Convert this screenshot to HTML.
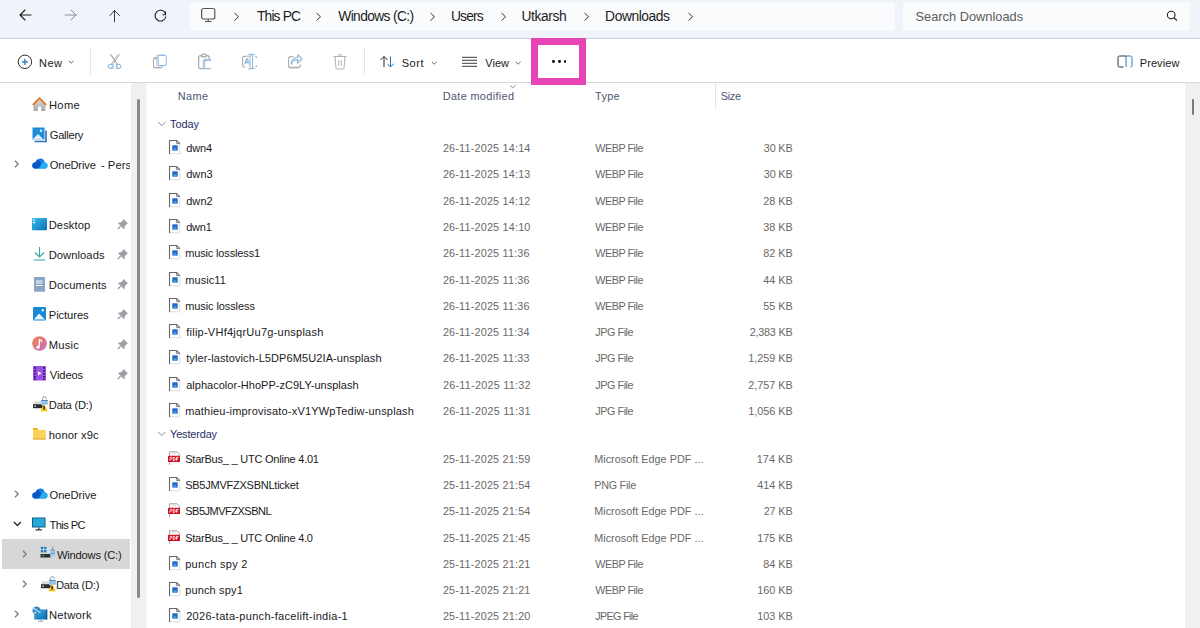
<!DOCTYPE html><html><head><meta charset="utf-8"><style>
html,body{margin:0;padding:0;width:1200px;height:628px;overflow:hidden;background:#ffffff;}
body{position:relative;font-family:"Liberation Sans",sans-serif;}
.t{position:absolute;white-space:nowrap;line-height:1;-webkit-font-smoothing:antialiased;}
svg{overflow:visible}
</style></head><body>
<div style="position:absolute;left:0px;top:0px;width:1200px;height:38px;background:#f0f4fa"></div>
<div style="position:absolute;left:0px;top:38px;width:1200px;height:1px;background:#c9d0d7"></div>
<svg style="position:absolute;left:14px;top:4px" width="20" height="24" viewBox="0 0 20 24"><path d="M6 11 H17 M6 11 L11 6 M6 11 L11 16" stroke="#1b1b1b" stroke-width="1.1" fill="none" stroke-linecap="round"/></svg>
<svg style="position:absolute;left:59px;top:4px" width="20" height="24" viewBox="0 0 20 24"><path d="M6 11 H17 M17 11 L12 6 M17 11 L12 16" stroke="#8a8d91" stroke-width="1" fill="none" stroke-linecap="round"/></svg>
<svg style="position:absolute;left:104px;top:4px" width="20" height="24" viewBox="0 0 20 24"><path d="M10.5 6.5 V17.8 M10.5 6.5 L6 11.5 M10.5 6.5 L15.5 11.5" stroke="#3a3a3a" stroke-width="1" fill="none" stroke-linecap="round"/></svg>
<svg style="position:absolute;left:150px;top:4.8px" width="20" height="24" viewBox="0 0 20 24"><path d="M15.3 8.2 A5.4 5.4 0 1 0 15.8 11.5" stroke="#1b1b1b" stroke-width="1.1" fill="none"/><path d="M15.5 6.5 V9.7 H12.5" stroke="#1b1b1b" stroke-width="1.1" fill="none"/></svg>
<div style="position:absolute;left:190px;top:2px;width:705px;height:29px;background:#fafbfd;border-radius:4px"></div>
<svg style="position:absolute;left:200px;top:7px" width="17" height="16" viewBox="0 0 17 16"><rect x="1.6" y="1.5" width="13.2" height="10.5" rx="2" stroke="#555" stroke-width="1.2" fill="none"/><path d="M5 14.5 H11.5 M8.2 12 V14.5" stroke="#555" stroke-width="1.1"/></svg>
<svg style="position:absolute;left:232.5px;top:11.5px" width="8" height="10" viewBox="0 0 8 10"><path d="M1.5 1 L5.5 4.8 L1.5 8.6" stroke="#333" stroke-width="1" fill="none"/></svg>
<svg style="position:absolute;left:315.3px;top:11.5px" width="8" height="10" viewBox="0 0 8 10"><path d="M1.5 1 L5.5 4.8 L1.5 8.6" stroke="#333" stroke-width="1" fill="none"/></svg>
<svg style="position:absolute;left:429px;top:11.5px" width="8" height="10" viewBox="0 0 8 10"><path d="M1.5 1 L5.5 4.8 L1.5 8.6" stroke="#333" stroke-width="1" fill="none"/></svg>
<svg style="position:absolute;left:500px;top:11.5px" width="8" height="10" viewBox="0 0 8 10"><path d="M1.5 1 L5.5 4.8 L1.5 8.6" stroke="#333" stroke-width="1" fill="none"/></svg>
<svg style="position:absolute;left:583.3px;top:11.5px" width="8" height="10" viewBox="0 0 8 10"><path d="M1.5 1 L5.5 4.8 L1.5 8.6" stroke="#333" stroke-width="1" fill="none"/></svg>
<svg style="position:absolute;left:687px;top:11.5px" width="8" height="10" viewBox="0 0 8 10"><path d="M1.5 1 L5.5 4.8 L1.5 8.6" stroke="#333" stroke-width="1" fill="none"/></svg>
<div class="t" style="left:257.00px;top:10px;font-size:13.8px;color:#1c1c1c;letter-spacing:-0.850px;">This PC</div>
<div class="t" style="left:338.30px;top:10px;font-size:13.8px;color:#1c1c1c;letter-spacing:-0.636px;">Windows (C:)</div>
<div class="t" style="left:451.00px;top:10px;font-size:13.8px;color:#1c1c1c;letter-spacing:-0.850px;">Users</div>
<div class="t" style="left:521.50px;top:10px;font-size:13.8px;color:#1c1c1c;letter-spacing:-0.375px;">Utkarsh</div>
<div class="t" style="left:605.10px;top:10px;font-size:13.8px;color:#1c1c1c;letter-spacing:-0.425px;">Downloads</div>
<div style="position:absolute;left:903px;top:2px;width:287px;height:29px;background:#fafbfd;border-radius:4px"></div>
<div class="t" style="left:915.50px;top:11px;font-size:12.8px;color:#5b5b5b;letter-spacing:0.013px;">Search Downloads</div>
<svg style="position:absolute;left:1164px;top:8px" width="16" height="16" viewBox="0 0 16 16"><circle cx="7.2" cy="7" r="3.8" stroke="#1f1f1f" stroke-width="1.1" fill="none"/><path d="M9.9 9.7 L13 12.6" stroke="#1f1f1f" stroke-width="1.2"/></svg>
<div style="position:absolute;left:0px;top:82px;width:1200px;height:1px;background:#d3d9e0"></div>
<svg style="position:absolute;left:14.6px;top:51.6px" width="20" height="20" viewBox="0 0 20 20"><circle cx="9.9" cy="9.8" r="6.7" stroke="#2b2b2b" stroke-width="1" fill="none"/><path d="M9.9 6.8 V12.9 M6.8 9.85 H13" stroke="#1e6fbf" stroke-width="1.2"/></svg>
<div class="t" style="left:38.90px;top:58px;font-size:11px;color:#1b1b1b;letter-spacing:0.550px;">New</div>
<svg style="position:absolute;left:67.8px;top:60px" width="8" height="6" viewBox="0 0 8 6"><path d="M0.8 0.8 L3.2 3.2 L5.6 0.8" stroke="#555" stroke-width="0.9" fill="none"/></svg>
<div style="position:absolute;left:90px;top:47px;width:1px;height:28px;background:#e6e6e6"></div>
<div style="position:absolute;left:364px;top:47px;width:1px;height:28px;background:#e6e6e6"></div>
<svg style="position:absolute;left:105px;top:52px" width="20" height="20" viewBox="0 0 20 20"><path d="M5.1 2.2 L11.8 11.6 M14.7 2.2 L8.4 11.6" stroke="#a9a9a9" stroke-width="0.95" fill="none"/><path d="M8.2 12.4 H5.2 Q3 12.4 3 14.4 Q3 16.5 5.2 16.5 H8.2 V12.4" stroke="#8fb6db" stroke-width="0.95" fill="none"/><path d="M11.3 12.4 H14 Q15.8 12.4 15.8 14.4 Q15.8 16.5 14 16.5 H11.3 V12.4" stroke="#8fb6db" stroke-width="0.95" fill="none"/></svg>
<svg style="position:absolute;left:105px;top:52px" width="20" height="20" viewBox="0 0 20 20"><path d="M6 2.5 L12.5 12 M13 2.5 L6.5 12" stroke="#a9a9a9" stroke-width="0.9" fill="none"/><circle cx="5.3" cy="14.3" r="2" stroke="#8fb6db" stroke-width="0.9" fill="none"/><circle cx="13.8" cy="14.3" r="2" stroke="#8fb6db" stroke-width="0.9" fill="none"/></svg>
<svg style="position:absolute;left:150px;top:52px" width="20" height="20" viewBox="0 0 20 20"><path d="M6.8 6.5 H5 Q3.5 6.5 3.5 8 V14 Q3.5 15.4 5 15.4 H10.8" stroke="#a9a9a9" stroke-width="0.95" fill="none"/><path d="M15.7 4.6 Q15.6 3.4 14.4 3.4 H9.6 Q8.2 3.4 8.2 4.8 V12.2 Q8.2 13.5 9.6 13.5 H14.4 Q15.6 13.5 15.7 12.4" stroke="#8fb6db" stroke-width="0.95" fill="none"/></svg>
<svg style="position:absolute;left:150px;top:52px" width="20" height="20" viewBox="0 0 20 20"><path d="M7 5.5 H5 Q3.5 5.5 3.5 7 V14.5 Q3.5 16 5 16 H11 Q12.5 16 12.5 14.5" stroke="#a9a9a9" stroke-width="0.9" fill="none"/><rect x="6.8" y="3" width="9.5" height="10.8" rx="1.6" stroke="#8fb6db" stroke-width="0.9" fill="none"/></svg>
<svg style="position:absolute;left:195px;top:52px" width="20" height="20" viewBox="0 0 20 20"><path d="M8 16.4 H5.2 Q3.8 16.4 3.8 15 V4.9 Q3.8 3.6 5.2 3.6 H6.9 M10.9 3.6 H13 Q14.4 3.6 14.4 5 V5.8" stroke="#a9a9a9" stroke-width="0.95" fill="none"/><rect x="6.9" y="2.2" width="4" height="2.4" rx="1.1" stroke="#a9a9a9" stroke-width="0.95" fill="none"/><path d="M16 7.4 H9.6 V16.5 H16" stroke="#8fb6db" stroke-width="0.95" fill="none"/></svg>
<svg style="position:absolute;left:195px;top:52px" width="20" height="20" viewBox="0 0 20 20"><path d="M6 4 H4.8 Q3.5 4 3.5 5.3 V15.5 Q3.5 16.8 4.8 16.8 H7.5 M11.5 4 H12.7 Q14 4 14 5.3 V7" stroke="#a9a9a9" stroke-width="0.9" fill="none"/><rect x="6.2" y="2.3" width="5" height="2.8" rx="1" stroke="#a9a9a9" stroke-width="0.9" fill="none"/><path d="M8.2 16.8 V8.5 H16 M8.2 16.8 H16" stroke="#8fb6db" stroke-width="0.9" fill="none"/></svg>
<svg style="position:absolute;left:240px;top:52px" width="20" height="20" viewBox="0 0 20 20"><path d="M10.4 4.2 H4.5 Q2.5 4.2 2.5 6.2 V12.6 Q2.5 14.6 4.2 14.6" stroke="#a9a9a9" stroke-width="0.95" fill="none"/><path d="M15.4 4.6 Q16.4 4.8 16.5 5.8 M16.5 13.4 Q16.4 14.3 15.5 14.6" stroke="#a9a9a9" stroke-width="0.95" fill="none"/><path d="M12.6 2.4 V16.5 M10.3 2.4 H14.8 M10.3 16.5 H14.8" stroke="#8fb6db" stroke-width="1" fill="none"/><path d="M5 12.4 L7.5 6.4 L10 12.4 M5.9 10.4 H9.1" stroke="#8fb6db" stroke-width="0.85" fill="none"/></svg>
<svg style="position:absolute;left:240px;top:52px" width="20" height="20" viewBox="0 0 20 20"><path d="M5.5 4.5 H4 Q2.5 4.5 2.5 6 V13.5 Q2.5 15 4 15 H5.5" stroke="#a9a9a9" stroke-width="0.9" fill="none"/><path d="M15.5 4.5 Q17 4.5 17 6 M17 13.5 Q17 15 15.5 15" stroke="#a9a9a9" stroke-width="0.9" fill="none"/><path d="M10 2.3 V17 M8.3 2.3 H11.7 M8.3 17 H11.7 M4.5 12.5 L6.5 6.5 L8.3 12.5 M5.2 10.5 H7.8" stroke="#8fb6db" stroke-width="0.9" fill="none"/></svg>
<svg style="position:absolute;left:285px;top:52px" width="20" height="20" viewBox="0 0 20 20"><path d="M8.8 4.4 H5.5 Q3.5 4.4 3.5 6.4 V13.2 Q3.5 15.2 5.5 15.2 H13.5 Q15.5 15.2 15.5 13.2 V12.6" stroke="#a9a9a9" stroke-width="0.95" fill="none"/><path d="M6.5 12.2 C7 8.8 9 7.8 12.5 7.8 V11.6 L17.2 7.6 L12.5 3.5 V5.5 C8.5 5.6 6.5 8.2 6.5 12.2 Z" stroke="#8fb6db" stroke-width="0.9" fill="none" stroke-linejoin="round"/></svg>
<svg style="position:absolute;left:285px;top:52px" width="20" height="20" viewBox="0 0 20 20"><path d="M7 5 H5 Q3.5 5 3.5 6.5 V14.5 Q3.5 16 5 16 H13.5 Q15 16 15 14.5 V13" stroke="#a9a9a9" stroke-width="0.9" fill="none"/><path d="M5.8 12.5 Q7.5 7.5 13 7.5 V10.3 L17 6.2 L13 2.5 V5 Q6.5 5.5 5.8 12.5 Z" stroke="#8fb6db" stroke-width="0.9" fill="none" stroke-linejoin="round"/></svg>
<svg style="position:absolute;left:330px;top:52px" width="20" height="20" viewBox="0 0 20 20"><path d="M3.5 4.5 H16.5 M5 4.5 L6 16.3 Q6.2 17 7 17 H13 Q13.8 17 14 16.3 L15 4.5 M8.3 4.5 Q8.3 2.3 10 2.3 Q11.7 2.3 11.7 4.5 M8.7 8 V13.8 M11.3 8 V13.8" stroke="#a9a9a9" stroke-width="0.9" fill="none"/></svg>
<svg style="position:absolute;left:378px;top:53px" width="20" height="18" viewBox="0 0 20 18"><path d="M6 3.5 V14 M6 3.5 L2.5 7 M6 3.5 L9.5 7" stroke="#2b2b2b" stroke-width="1" fill="none"/><path d="M12.5 3.5 V14 M12.5 14 L9.3 10.7 M12.5 14 L15.8 10.7" stroke="#1e78c2" stroke-width="1" fill="none"/></svg>
<div class="t" style="left:401.70px;top:58px;font-size:11px;color:#1b1b1b;letter-spacing:0.533px;">Sort</div>
<svg style="position:absolute;left:430.5px;top:61px" width="8" height="6" viewBox="0 0 8 6"><path d="M0.8 0.8 L3.2 3.2 L5.6 0.8" stroke="#555" stroke-width="0.9" fill="none"/></svg>
<svg style="position:absolute;left:460px;top:54px" width="20" height="16" viewBox="0 0 20 16"><path d="M2 3.3 H17 M2 6.3 H17 M2 9.3 H17 M2 12.3 H17" stroke="#2e2e2e" stroke-width="0.95" fill="none"/></svg>
<div class="t" style="left:485.30px;top:58px;font-size:11px;color:#1b1b1b;letter-spacing:0.000px;">View</div>
<svg style="position:absolute;left:514.5px;top:61px" width="8" height="6" viewBox="0 0 8 6"><path d="M0.8 0.8 L3.2 3.2 L5.6 0.8" stroke="#555" stroke-width="0.9" fill="none"/></svg>
<div style="position:absolute;left:531px;top:38px;width:55px;height:47px;box-sizing:border-box;border:7px solid #e844b5;background:#ffffff"></div>
<div style="position:absolute;left:552.3000000000001px;top:59.9px;width:2.8px;height:2.8px;background:#111;border-radius:50%"></div>
<div style="position:absolute;left:557.9px;top:59.9px;width:2.8px;height:2.8px;background:#111;border-radius:50%"></div>
<div style="position:absolute;left:563.6px;top:59.9px;width:2.8px;height:2.8px;background:#111;border-radius:50%"></div>
<svg style="position:absolute;left:1116px;top:54px" width="20" height="16" viewBox="0 0 20 16"><path d="M7.5 13 H3.5 Q2 13 2 11.5 V3.5 Q2 2 3.5 2 H10" stroke="#333" stroke-width="1" fill="none"/><path d="M10 2 H14.5 Q16 2 16 3.5 V11.5 Q16 13 14.5 13 M10 2 V13" stroke="#2a7bc4" stroke-width="1" fill="none"/></svg>
<div class="t" style="left:1139.80px;top:58px;font-size:11px;color:#1b1b1b;letter-spacing:0.067px;">Preview</div>
<div style="position:absolute;left:2px;top:539px;width:128px;height:30px;background:#d7d7d7"></div>
<div class="t" style="left:48.90px;top:100px;font-size:11.2px;color:#1a1a1a;letter-spacing:0.367px;">Home</div>
<div class="t" style="left:49.80px;top:130px;font-size:11.2px;color:#1a1a1a;letter-spacing:-0.300px;">Gallery</div>
<div class="t" style="left:49.80px;top:160px;font-size:11.2px;color:#1a1a1a;letter-spacing:-0.171px;">OneDrive</div>
<div class="t" style="left:100.90px;top:160px;font-size:11.2px;color:#1a1a1a;">-</div>
<div class="t" style="left:107.80px;top:160px;font-size:11.2px;color:#1a1a1a;letter-spacing:0.125px;">Perso</div>
<div class="t" style="left:48.70px;top:220px;font-size:11.2px;color:#1a1a1a;letter-spacing:0.083px;">Desktop</div>
<div class="t" style="left:48.70px;top:250px;font-size:11.2px;color:#1a1a1a;letter-spacing:0.062px;">Downloads</div>
<div class="t" style="left:48.80px;top:280px;font-size:11.2px;color:#1a1a1a;letter-spacing:0.163px;">Documents</div>
<div class="t" style="left:48.80px;top:310px;font-size:11.2px;color:#1a1a1a;letter-spacing:-0.086px;">Pictures</div>
<div class="t" style="left:48.80px;top:340px;font-size:11.2px;color:#1a1a1a;letter-spacing:0.200px;">Music</div>
<div class="t" style="left:49.80px;top:370px;font-size:11.2px;color:#1a1a1a;letter-spacing:-0.120px;">Videos</div>
<div class="t" style="left:48.80px;top:400px;font-size:11.2px;color:#1a1a1a;letter-spacing:-0.225px;">Data (D:)</div>
<div class="t" style="left:48.80px;top:430px;font-size:11.2px;color:#1a1a1a;letter-spacing:0.088px;">honor x9c</div>
<div class="t" style="left:49.50px;top:490px;font-size:11.2px;color:#1a1a1a;letter-spacing:-0.043px;">OneDrive</div>
<div class="t" style="left:49.50px;top:520px;font-size:11.2px;color:#1a1a1a;letter-spacing:-0.600px;">This PC</div>
<div class="t" style="left:57.00px;top:550px;font-size:11.2px;color:#1a1a1a;letter-spacing:-0.227px;">Windows (C:)</div>
<div class="t" style="left:56.00px;top:580px;font-size:11.2px;color:#1a1a1a;letter-spacing:-0.250px;">Data (D:)</div>
<div class="t" style="left:49.00px;top:610px;font-size:11.2px;color:#1a1a1a;letter-spacing:0.250px;">Network</div>
<svg style="position:absolute;left:14.2px;top:159.8px" width="6" height="9" viewBox="0 0 6 9"><path d="M1 0.8 L4.2 4 L1 7.2" stroke="#7a7a7a" stroke-width="1.25" fill="none"/></svg>
<svg style="position:absolute;left:14.2px;top:489.8px" width="6" height="9" viewBox="0 0 6 9"><path d="M1 0.8 L4.2 4 L1 7.2" stroke="#7a7a7a" stroke-width="1.25" fill="none"/></svg>
<svg style="position:absolute;left:12.6px;top:520.6px" width="10" height="7" viewBox="0 0 10 7"><path d="M1 1 L4.4 4.6 L7.8 1" stroke="#2a2a2a" stroke-width="1.4" fill="none"/></svg>
<svg style="position:absolute;left:21.6px;top:550px" width="6" height="9" viewBox="0 0 6 9"><path d="M1 0.8 L4.2 4 L1 7.2" stroke="#7a7a7a" stroke-width="1.25" fill="none"/></svg>
<svg style="position:absolute;left:21.6px;top:580px" width="6" height="9" viewBox="0 0 6 9"><path d="M1 0.8 L4.2 4 L1 7.2" stroke="#7a7a7a" stroke-width="1.25" fill="none"/></svg>
<svg style="position:absolute;left:14.2px;top:609.8px" width="6" height="9" viewBox="0 0 6 9"><path d="M1 0.8 L4.2 4 L1 7.2" stroke="#7a7a7a" stroke-width="1.25" fill="none"/></svg>
<svg style="position:absolute;left:117.2px;top:218px" width="12" height="12" viewBox="0 0 12 12"><path d="M6.2 0.8 L11 5.6 L9.6 6.2 L7.5 8.8 L7.8 10.5 L6.8 11 L1.2 5.4 L1.6 4.4 L3.4 4.6 L6 2.6 Z" fill="#9aa0a6"/><path d="M3.6 8.2 L0.8 11" stroke="#9aa0a6" stroke-width="1.3"/></svg>
<svg style="position:absolute;left:117.2px;top:248px" width="12" height="12" viewBox="0 0 12 12"><path d="M6.2 0.8 L11 5.6 L9.6 6.2 L7.5 8.8 L7.8 10.5 L6.8 11 L1.2 5.4 L1.6 4.4 L3.4 4.6 L6 2.6 Z" fill="#9aa0a6"/><path d="M3.6 8.2 L0.8 11" stroke="#9aa0a6" stroke-width="1.3"/></svg>
<svg style="position:absolute;left:117.2px;top:278px" width="12" height="12" viewBox="0 0 12 12"><path d="M6.2 0.8 L11 5.6 L9.6 6.2 L7.5 8.8 L7.8 10.5 L6.8 11 L1.2 5.4 L1.6 4.4 L3.4 4.6 L6 2.6 Z" fill="#9aa0a6"/><path d="M3.6 8.2 L0.8 11" stroke="#9aa0a6" stroke-width="1.3"/></svg>
<svg style="position:absolute;left:117.2px;top:308px" width="12" height="12" viewBox="0 0 12 12"><path d="M6.2 0.8 L11 5.6 L9.6 6.2 L7.5 8.8 L7.8 10.5 L6.8 11 L1.2 5.4 L1.6 4.4 L3.4 4.6 L6 2.6 Z" fill="#9aa0a6"/><path d="M3.6 8.2 L0.8 11" stroke="#9aa0a6" stroke-width="1.3"/></svg>
<svg style="position:absolute;left:117.2px;top:338px" width="12" height="12" viewBox="0 0 12 12"><path d="M6.2 0.8 L11 5.6 L9.6 6.2 L7.5 8.8 L7.8 10.5 L6.8 11 L1.2 5.4 L1.6 4.4 L3.4 4.6 L6 2.6 Z" fill="#9aa0a6"/><path d="M3.6 8.2 L0.8 11" stroke="#9aa0a6" stroke-width="1.3"/></svg>
<svg style="position:absolute;left:117.2px;top:368px" width="12" height="12" viewBox="0 0 12 12"><path d="M6.2 0.8 L11 5.6 L9.6 6.2 L7.5 8.8 L7.8 10.5 L6.8 11 L1.2 5.4 L1.6 4.4 L3.4 4.6 L6 2.6 Z" fill="#9aa0a6"/><path d="M3.6 8.2 L0.8 11" stroke="#9aa0a6" stroke-width="1.3"/></svg>
<svg style="position:absolute;left:32px;top:96.5px" width="15" height="15" viewBox="0 0 15 15"><defs><linearGradient id="hg" x1="0" y1="0" x2="0" y2="1"><stop offset="0" stop-color="#d8d8da"/><stop offset="1" stop-color="#a9abae"/></linearGradient></defs><path d="M1.5 7.5 L7.5 2 L13.5 7.5 V14 H9 V9.5 H6 V14 H1.5 Z" fill="url(#hg)"/><path d="M0.8 8 L7.5 1.2 L14.2 8" stroke="#e07b22" stroke-width="1.8" fill="none" stroke-linejoin="round"/></svg>
<svg style="position:absolute;left:32px;top:126.5px" width="16" height="16" viewBox="0 0 16 16"><path d="M2.5 14.5 H14 V3.5" stroke="#2f6fb8" stroke-width="1.6" fill="none"/><rect x="0.5" y="0.5" width="12" height="12" fill="#1f8ad8"/><path d="M0.5 12.5 L6 7 L11.5 12.5 Z" fill="#dff0fb"/><circle cx="9" cy="3.8" r="1.2" fill="#dff0fb"/></svg>
<svg style="position:absolute;left:32px;top:158px" width="16" height="12" viewBox="0 0 16 12"><path d="M3.5 10.6 Q0.2 10.6 0.3 7.5 Q0.5 4.4 3.6 4.3 Q5 0.6 8.6 0.6 Q12 0.8 12.7 4.5 Q15.6 4.8 15.5 7.7 Q15.3 10.6 12.2 10.6 Z" fill="#1a7fe0"/><path d="M3.5 10.6 Q0.2 10.6 0.3 7.5 Q0.5 4.4 3.6 4.3 Q4.2 2.6 5.6 1.6 L9.5 5 L6.8 10.6 Z" fill="#0e56c4"/><path d="M7.2 10.6 L10.3 4.6 Q12 4 12.7 4.5 Q15.6 4.8 15.5 7.7 Q15.3 10.6 12.2 10.6 Z" fill="#22b0f2"/></svg>
<svg style="position:absolute;left:32px;top:218px" width="15" height="13" viewBox="0 0 15 13"><defs><linearGradient id="dg" x1="0" y1="0" x2="1" y2="1"><stop offset="0" stop-color="#36c2ee"/><stop offset="1" stop-color="#0f6cb8"/></linearGradient></defs><rect x="0" y="0" width="15" height="12.2" rx="1" fill="url(#dg)"/><rect x="1" y="1.5" width="2" height="1.2" fill="#e8f6fd"/><rect x="1" y="4" width="2" height="1.2" fill="#e8f6fd"/></svg>
<svg style="position:absolute;left:33px;top:246px" width="13" height="15" viewBox="0 0 13 15"><path d="M6.5 1 V11 M2 6.5 L6.5 11 L11 6.5 M0.8 14 H12.2" stroke="#2ea8a8" stroke-width="1.1" fill="none"/></svg>
<svg style="position:absolute;left:34px;top:277px" width="11" height="15" viewBox="0 0 11 15"><rect x="0" y="0" width="11" height="14.7" rx="0.8" fill="#8aa3c6"/><path d="M2 4 H8.5 M2 6 H8.5 M2 8.5 H8.5" stroke="#fff" stroke-width="1.2"/></svg>
<svg style="position:absolute;left:33px;top:307px" width="13" height="14" viewBox="0 0 13 14"><rect x="0" y="0" width="13" height="13.5" rx="1" fill="#1b87d6"/><path d="M0.8 12.5 L6 6.5 L12 12.5 Z" fill="#e6f4fc"/><circle cx="9.8" cy="3.3" r="1.2" fill="#e6f4fc"/></svg>
<svg style="position:absolute;left:32px;top:336px" width="15" height="15" viewBox="0 0 15 15"><defs><linearGradient id="mg" x1="0" y1="0" x2="1" y2="1"><stop offset="0" stop-color="#f2804a"/><stop offset="1" stop-color="#c66bc0"/></linearGradient></defs><circle cx="7.5" cy="7.5" r="7.3" fill="url(#mg)"/><path d="M7.3 3.3 V10.8 M7.3 3.3 Q9.5 4 10 6" stroke="#fff" stroke-width="1.3" fill="none"/><circle cx="6" cy="11.2" r="1.6" fill="#fff"/></svg>
<svg style="position:absolute;left:33px;top:366px" width="13" height="15" viewBox="0 0 13 15"><rect x="0" y="0" width="13" height="14.5" fill="#9a52e0"/><g fill="#4a1890"><rect x="1" y="1" width="2" height="1.6"/><rect x="1" y="4" width="2" height="1.6"/><rect x="1" y="7" width="2" height="1.6"/><rect x="1" y="10" width="2" height="1.6"/><rect x="1" y="12.6" width="2" height="1.4"/><rect x="10" y="1" width="2" height="1.6"/><rect x="10" y="4" width="2" height="1.6"/><rect x="10" y="7" width="2" height="1.6"/><rect x="10" y="10" width="2" height="1.6"/><rect x="10" y="12.6" width="2" height="1.4"/></g><path d="M5 5.2 L8.5 7.3 L5 9.4 Z" fill="#fff"/></svg>
<svg style="position:absolute;left:32px;top:396px" width="16" height="16" viewBox="0 0 16 16"><path d="M1 8.2 L2.6 5.2 H10.2 V8.2 Z" fill="#dcdcdc"/><rect x="1" y="8.2" width="9.6" height="4" fill="#2a2e33"/><rect x="2.3" y="9.6" width="1.6" height="1.2" fill="#f0f0f0"/><path d="M10.6 4.2 V2.4 Q10.6 0.6 12.4 0.6 Q14.2 0.6 14.2 2.4 V3.2" stroke="#9a9a9a" stroke-width="1" fill="none"/><rect x="9.2" y="4" width="6.6" height="5" fill="#a6d3f0"/><rect x="9.2" y="4" width="6.6" height="1.1" fill="#4c84b6"/><rect x="9.2" y="6.6" width="6.6" height="0.8" fill="#6fa2cf"/><path d="M12.1 7.8 L15.9 15.2 H8.3 Z" fill="#f2c21b"/><path d="M12.1 10 V13.4" stroke="#111" stroke-width="1.2"/></svg>
<svg style="position:absolute;left:33px;top:428px" width="13" height="12" viewBox="0 0 13 12"><rect x="0" y="0" width="5" height="3" fill="#e8b818"/><rect x="0" y="2" width="12.8" height="9.5" fill="#fcd35a"/><rect x="0" y="10.5" width="12.8" height="1" fill="#d9a632"/></svg>
<svg style="position:absolute;left:32px;top:488px" width="16" height="12" viewBox="0 0 16 12"><path d="M3.5 10.6 Q0.2 10.6 0.3 7.5 Q0.5 4.4 3.6 4.3 Q5 0.6 8.6 0.6 Q12 0.8 12.7 4.5 Q15.6 4.8 15.5 7.7 Q15.3 10.6 12.2 10.6 Z" fill="#1a7fe0"/><path d="M3.5 10.6 Q0.2 10.6 0.3 7.5 Q0.5 4.4 3.6 4.3 Q4.2 2.6 5.6 1.6 L9.5 5 L6.8 10.6 Z" fill="#0e56c4"/><path d="M7.2 10.6 L10.3 4.6 Q12 4 12.7 4.5 Q15.6 4.8 15.5 7.7 Q15.3 10.6 12.2 10.6 Z" fill="#22b0f2"/></svg>
<svg style="position:absolute;left:32px;top:517px" width="15" height="14" viewBox="0 0 15 14"><rect x="0" y="0.5" width="13.5" height="10" fill="#0c5a80"/><rect x="0.9" y="1.4" width="11.7" height="8.2" fill="#27a9d8"/><path d="M6.75 10.5 V12.3 M3.5 12.8 H10" stroke="#333" stroke-width="1.2"/></svg>
<svg style="position:absolute;left:40px;top:546px" width="16" height="14" viewBox="0 0 16 14"><g fill="#1a7fc8"><rect x="0.8" y="0.8" width="2.4" height="2.4"/><rect x="4" y="0.8" width="2.4" height="2.4"/><rect x="0.8" y="4" width="2.4" height="2.4"/><rect x="4" y="4" width="2.4" height="2.4"/></g><rect x="0.5" y="8" width="10" height="3.5" fill="#2b2f33"/><rect x="2" y="9.2" width="2" height="1" fill="#3bbf4a"/><rect x="10.5" y="4" width="4.5" height="6.5" fill="#9fd0f0"/><path d="M10.5 4.2 H15 M10.5 7.3 H15 M12.7 0.5 V4" stroke="#4a7fae" stroke-width="0.8"/></svg>
<svg style="position:absolute;left:40px;top:576px" width="16" height="16" viewBox="0 0 16 16"><path d="M1 8.2 L2.6 5.2 H10.2 V8.2 Z" fill="#dcdcdc"/><rect x="1" y="8.2" width="9.6" height="4" fill="#2a2e33"/><rect x="2.3" y="9.6" width="1.6" height="1.2" fill="#f0f0f0"/><path d="M10.6 4.2 V2.4 Q10.6 0.6 12.4 0.6 Q14.2 0.6 14.2 2.4 V3.2" stroke="#9a9a9a" stroke-width="1" fill="none"/><rect x="9.2" y="4" width="6.6" height="5" fill="#a6d3f0"/><rect x="9.2" y="4" width="6.6" height="1.1" fill="#4c84b6"/><rect x="9.2" y="6.6" width="6.6" height="0.8" fill="#6fa2cf"/><path d="M12.1 7.8 L15.9 15.2 H8.3 Z" fill="#f2c21b"/><path d="M12.1 10 V13.4" stroke="#111" stroke-width="1.2"/></svg>
<svg style="position:absolute;left:32px;top:606px" width="16" height="16" viewBox="0 0 16 16"><defs><linearGradient id="ng" x1="0" y1="0" x2="1" y2="1"><stop offset="0" stop-color="#2fb4e8"/><stop offset="1" stop-color="#116aa8"/></linearGradient></defs><rect x="2.2" y="3.5" width="13" height="10" fill="url(#ng)"/><rect x="14.2" y="3.5" width="1" height="10" fill="#0c4f7f"/><path d="M8.7 13.5 V15 M6 15.2 H11.5" stroke="#8ab" stroke-width="1"/><circle cx="4.6" cy="4.6" r="4.2" fill="#3c88c4"/><path d="M1.2 3 Q3.5 2.5 5 4.5 Q6.5 6.5 8.6 6 M2 7.2 Q3 5.8 4 7.5" stroke="#c9ecfb" stroke-width="1.1" fill="none"/></svg>
<div style="position:absolute;left:1185px;top:83px;width:15px;height:545px;background:#f0f0f0"></div>
<div style="position:absolute;left:1192px;top:99px;width:2.4px;height:16px;background:#7a7a7a;border-radius:2px"></div>
<div class="t" style="left:177.75px;top:91px;font-size:10.9px;color:#4b5670;letter-spacing:0.433px;">Name</div>
<div class="t" style="left:442.75px;top:91px;font-size:10.9px;color:#4b5670;letter-spacing:0.333px;">Date modified</div>
<div class="t" style="left:595.00px;top:91px;font-size:10.9px;color:#4b5670;letter-spacing:0.333px;">Type</div>
<div class="t" style="left:720.80px;top:91px;font-size:10.9px;color:#4b5670;letter-spacing:-0.333px;">Size</div>
<div style="position:absolute;left:715px;top:83px;width:1px;height:25px;background:#e3e3e3"></div>
<svg style="position:absolute;left:509px;top:84px" width="8" height="6" viewBox="0 0 8 6"><path d="M1 1.2 L3.8 3.9 L6.6 1.2" stroke="#777" stroke-width="0.85" fill="none"/></svg>
<svg style="position:absolute;left:156.5px;top:120.5px" width="10" height="6" viewBox="0 0 10 6"><path d="M1 0.8 L4.8 4.6 L8.6 0.8" stroke="#7a7f8a" stroke-width="0.9" fill="none"/></svg>
<div class="t" style="left:170.00px;top:119px;font-size:10.9px;color:#252d66;letter-spacing:0.000px;">Today</div>
<svg style="position:absolute;left:156.5px;top:430.5px" width="10" height="6" viewBox="0 0 10 6"><path d="M1 0.8 L4.8 4.6 L8.6 0.8" stroke="#7a7f8a" stroke-width="0.9" fill="none"/></svg>
<div class="t" style="left:170.00px;top:429px;font-size:10.9px;color:#252d66;letter-spacing:-0.125px;">Yesterday</div>
<svg style="position:absolute;left:168px;top:140px" width="14" height="15" viewBox="0 0 14 15"><path d="M11.8 4 V13.8 H1.5" stroke="#d6d6d6" stroke-width="0.8" fill="none"/><path d="M1.5 13.9 V0.5 H8.6 L11.9 3.6" stroke="#666" stroke-width="1.05" fill="none"/><path d="M8.6 0.5 V3.6 H11.9" stroke="#777" stroke-width="0.9" fill="none"/><rect x="4.3" y="5.3" width="5.4" height="5.3" fill="#2768c8"/><path d="M4.5 10.6 L7 7.8 L9.5 10.6 Z" fill="#4e9ee6"/></svg>
<div class="t" style="left:186.20px;top:143px;font-size:11px;color:#1a1a1a;letter-spacing:-0.133px;">dwn4</div>
<div class="t" style="left:442.90px;top:143px;font-size:10.8px;color:#686868;letter-spacing:0.200px;">26-11-2025 14:14</div>
<div class="t" style="left:595.20px;top:143px;font-size:10.8px;color:#686868;letter-spacing:-0.463px;">WEBP File</div>
<div class="t" style="right:407.55px;text-align:right;top:143px;font-size:10.8px;color:#686868;letter-spacing:-0.150px;">30 KB</div>
<svg style="position:absolute;left:168px;top:166px" width="14" height="15" viewBox="0 0 14 15"><path d="M11.8 4 V13.8 H1.5" stroke="#d6d6d6" stroke-width="0.8" fill="none"/><path d="M1.5 13.9 V0.5 H8.6 L11.9 3.6" stroke="#666" stroke-width="1.05" fill="none"/><path d="M8.6 0.5 V3.6 H11.9" stroke="#777" stroke-width="0.9" fill="none"/><rect x="4.3" y="5.3" width="5.4" height="5.3" fill="#2768c8"/><path d="M4.5 10.6 L7 7.8 L9.5 10.6 Z" fill="#4e9ee6"/></svg>
<div class="t" style="left:186.20px;top:169px;font-size:11px;color:#1a1a1a;letter-spacing:0.067px;">dwn3</div>
<div class="t" style="left:442.90px;top:169px;font-size:10.8px;color:#686868;letter-spacing:0.200px;">26-11-2025 14:13</div>
<div class="t" style="left:595.20px;top:169px;font-size:10.8px;color:#686868;letter-spacing:-0.463px;">WEBP File</div>
<div class="t" style="right:407.55px;text-align:right;top:169px;font-size:10.8px;color:#686868;letter-spacing:-0.150px;">30 KB</div>
<svg style="position:absolute;left:168px;top:193px" width="14" height="15" viewBox="0 0 14 15"><path d="M11.8 4 V13.8 H1.5" stroke="#d6d6d6" stroke-width="0.8" fill="none"/><path d="M1.5 13.9 V0.5 H8.6 L11.9 3.6" stroke="#666" stroke-width="1.05" fill="none"/><path d="M8.6 0.5 V3.6 H11.9" stroke="#777" stroke-width="0.9" fill="none"/><rect x="4.3" y="5.3" width="5.4" height="5.3" fill="#2768c8"/><path d="M4.5 10.6 L7 7.8 L9.5 10.6 Z" fill="#4e9ee6"/></svg>
<div class="t" style="left:186.20px;top:196px;font-size:11px;color:#1a1a1a;letter-spacing:0.067px;">dwn2</div>
<div class="t" style="left:442.90px;top:196px;font-size:10.8px;color:#686868;letter-spacing:0.200px;">26-11-2025 14:12</div>
<div class="t" style="left:595.20px;top:196px;font-size:10.8px;color:#686868;letter-spacing:-0.463px;">WEBP File</div>
<div class="t" style="right:407.40px;text-align:right;top:196px;font-size:10.8px;color:#686868;">28 KB</div>
<svg style="position:absolute;left:168px;top:219px" width="14" height="15" viewBox="0 0 14 15"><path d="M11.8 4 V13.8 H1.5" stroke="#d6d6d6" stroke-width="0.8" fill="none"/><path d="M1.5 13.9 V0.5 H8.6 L11.9 3.6" stroke="#666" stroke-width="1.05" fill="none"/><path d="M8.6 0.5 V3.6 H11.9" stroke="#777" stroke-width="0.9" fill="none"/><rect x="4.3" y="5.3" width="5.4" height="5.3" fill="#2768c8"/><path d="M4.5 10.6 L7 7.8 L9.5 10.6 Z" fill="#4e9ee6"/></svg>
<div class="t" style="left:186.20px;top:222px;font-size:11px;color:#1a1a1a;letter-spacing:-0.200px;">dwn1</div>
<div class="t" style="left:442.90px;top:222px;font-size:10.8px;color:#686868;letter-spacing:0.200px;">26-11-2025 14:10</div>
<div class="t" style="left:595.20px;top:222px;font-size:10.8px;color:#686868;letter-spacing:-0.463px;">WEBP File</div>
<div class="t" style="right:407.40px;text-align:right;top:222px;font-size:10.8px;color:#686868;">38 KB</div>
<svg style="position:absolute;left:168px;top:245px" width="14" height="15" viewBox="0 0 14 15"><path d="M11.8 4 V13.8 H1.5" stroke="#d6d6d6" stroke-width="0.8" fill="none"/><path d="M1.5 13.9 V0.5 H8.6 L11.9 3.6" stroke="#666" stroke-width="1.05" fill="none"/><path d="M8.6 0.5 V3.6 H11.9" stroke="#777" stroke-width="0.9" fill="none"/><rect x="4.3" y="5.3" width="5.4" height="5.3" fill="#2768c8"/><path d="M4.5 10.6 L7 7.8 L9.5 10.6 Z" fill="#4e9ee6"/></svg>
<div class="t" style="left:185.20px;top:248px;font-size:11px;color:#1a1a1a;letter-spacing:-0.150px;">music lossless1</div>
<div class="t" style="left:442.90px;top:248px;font-size:10.8px;color:#686868;letter-spacing:0.200px;">26-11-2025 11:36</div>
<div class="t" style="left:595.20px;top:248px;font-size:10.8px;color:#686868;letter-spacing:-0.463px;">WEBP File</div>
<div class="t" style="right:407.40px;text-align:right;top:248px;font-size:10.8px;color:#686868;">82 KB</div>
<svg style="position:absolute;left:168px;top:272px" width="14" height="15" viewBox="0 0 14 15"><path d="M11.8 4 V13.8 H1.5" stroke="#d6d6d6" stroke-width="0.8" fill="none"/><path d="M1.5 13.9 V0.5 H8.6 L11.9 3.6" stroke="#666" stroke-width="1.05" fill="none"/><path d="M8.6 0.5 V3.6 H11.9" stroke="#777" stroke-width="0.9" fill="none"/><rect x="4.3" y="5.3" width="5.4" height="5.3" fill="#2768c8"/><path d="M4.5 10.6 L7 7.8 L9.5 10.6 Z" fill="#4e9ee6"/></svg>
<div class="t" style="left:185.20px;top:275px;font-size:11px;color:#1a1a1a;letter-spacing:0.083px;">music11</div>
<div class="t" style="left:442.90px;top:275px;font-size:10.8px;color:#686868;letter-spacing:0.200px;">26-11-2025 11:36</div>
<div class="t" style="left:595.20px;top:275px;font-size:10.8px;color:#686868;letter-spacing:-0.463px;">WEBP File</div>
<div class="t" style="right:407.40px;text-align:right;top:275px;font-size:10.8px;color:#686868;">44 KB</div>
<svg style="position:absolute;left:168px;top:298px" width="14" height="15" viewBox="0 0 14 15"><path d="M11.8 4 V13.8 H1.5" stroke="#d6d6d6" stroke-width="0.8" fill="none"/><path d="M1.5 13.9 V0.5 H8.6 L11.9 3.6" stroke="#666" stroke-width="1.05" fill="none"/><path d="M8.6 0.5 V3.6 H11.9" stroke="#777" stroke-width="0.9" fill="none"/><rect x="4.3" y="5.3" width="5.4" height="5.3" fill="#2768c8"/><path d="M4.5 10.6 L7 7.8 L9.5 10.6 Z" fill="#4e9ee6"/></svg>
<div class="t" style="left:185.20px;top:301px;font-size:11px;color:#1a1a1a;letter-spacing:-0.092px;">music lossless</div>
<div class="t" style="left:442.90px;top:301px;font-size:10.8px;color:#686868;letter-spacing:0.200px;">26-11-2025 11:36</div>
<div class="t" style="left:595.20px;top:301px;font-size:10.8px;color:#686868;letter-spacing:-0.463px;">WEBP File</div>
<div class="t" style="right:407.40px;text-align:right;top:301px;font-size:10.8px;color:#686868;">55 KB</div>
<svg style="position:absolute;left:168px;top:324px" width="14" height="15" viewBox="0 0 14 15"><path d="M11.8 4 V13.8 H1.5" stroke="#d6d6d6" stroke-width="0.8" fill="none"/><path d="M1.5 13.9 V0.5 H8.6 L11.9 3.6" stroke="#666" stroke-width="1.05" fill="none"/><path d="M8.6 0.5 V3.6 H11.9" stroke="#777" stroke-width="0.9" fill="none"/><rect x="4.3" y="5.3" width="5.4" height="5.3" fill="#2768c8"/><path d="M4.5 10.6 L7 7.8 L9.5 10.6 Z" fill="#4e9ee6"/></svg>
<div class="t" style="left:186.20px;top:327px;font-size:11px;color:#1a1a1a;letter-spacing:0.252px;">filip-VHf4jqrUu7g-unsplash</div>
<div class="t" style="left:442.90px;top:327px;font-size:10.8px;color:#686868;letter-spacing:0.200px;">26-11-2025 11:34</div>
<div class="t" style="left:595.20px;top:327px;font-size:10.8px;color:#686868;letter-spacing:-0.429px;">JPG File</div>
<div class="t" style="right:407.61px;text-align:right;top:327px;font-size:10.8px;color:#686868;letter-spacing:-0.214px;">2,383 KB</div>
<svg style="position:absolute;left:168px;top:350px" width="14" height="15" viewBox="0 0 14 15"><path d="M11.8 4 V13.8 H1.5" stroke="#d6d6d6" stroke-width="0.8" fill="none"/><path d="M1.5 13.9 V0.5 H8.6 L11.9 3.6" stroke="#666" stroke-width="1.05" fill="none"/><path d="M8.6 0.5 V3.6 H11.9" stroke="#777" stroke-width="0.9" fill="none"/><rect x="4.3" y="5.3" width="5.4" height="5.3" fill="#2768c8"/><path d="M4.5 10.6 L7 7.8 L9.5 10.6 Z" fill="#4e9ee6"/></svg>
<div class="t" style="left:186.20px;top:353px;font-size:11px;color:#1a1a1a;letter-spacing:0.097px;">tyler-lastovich-L5DP6M5U2IA-unsplash</div>
<div class="t" style="left:442.90px;top:353px;font-size:10.8px;color:#686868;letter-spacing:0.200px;">26-11-2025 11:33</div>
<div class="t" style="left:595.20px;top:353px;font-size:10.8px;color:#686868;letter-spacing:-0.429px;">JPG File</div>
<div class="t" style="right:407.40px;text-align:right;top:353px;font-size:10.8px;color:#686868;">1,259 KB</div>
<svg style="position:absolute;left:168px;top:377px" width="14" height="15" viewBox="0 0 14 15"><path d="M11.8 4 V13.8 H1.5" stroke="#d6d6d6" stroke-width="0.8" fill="none"/><path d="M1.5 13.9 V0.5 H8.6 L11.9 3.6" stroke="#666" stroke-width="1.05" fill="none"/><path d="M8.6 0.5 V3.6 H11.9" stroke="#777" stroke-width="0.9" fill="none"/><rect x="4.3" y="5.3" width="5.4" height="5.3" fill="#2768c8"/><path d="M4.5 10.6 L7 7.8 L9.5 10.6 Z" fill="#4e9ee6"/></svg>
<div class="t" style="left:186.20px;top:380px;font-size:11px;color:#1a1a1a;letter-spacing:0.020px;">alphacolor-HhoPP-zC9LY-unsplash</div>
<div class="t" style="left:442.90px;top:380px;font-size:10.8px;color:#686868;letter-spacing:0.267px;">26-11-2025 11:32</div>
<div class="t" style="left:595.20px;top:380px;font-size:10.8px;color:#686868;letter-spacing:-0.429px;">JPG File</div>
<div class="t" style="right:407.40px;text-align:right;top:380px;font-size:10.8px;color:#686868;">2,757 KB</div>
<svg style="position:absolute;left:168px;top:403px" width="14" height="15" viewBox="0 0 14 15"><path d="M11.8 4 V13.8 H1.5" stroke="#d6d6d6" stroke-width="0.8" fill="none"/><path d="M1.5 13.9 V0.5 H8.6 L11.9 3.6" stroke="#666" stroke-width="1.05" fill="none"/><path d="M8.6 0.5 V3.6 H11.9" stroke="#777" stroke-width="0.9" fill="none"/><rect x="4.3" y="5.3" width="5.4" height="5.3" fill="#2768c8"/><path d="M4.5 10.6 L7 7.8 L9.5 10.6 Z" fill="#4e9ee6"/></svg>
<div class="t" style="left:185.20px;top:406px;font-size:11px;color:#1a1a1a;letter-spacing:0.190px;">mathieu-improvisato-xV1YWpTediw-unsplash</div>
<div class="t" style="left:442.90px;top:406px;font-size:10.8px;color:#686868;letter-spacing:0.267px;">26-11-2025 11:31</div>
<div class="t" style="left:595.20px;top:406px;font-size:10.8px;color:#686868;letter-spacing:-0.429px;">JPG File</div>
<div class="t" style="right:407.40px;text-align:right;top:406px;font-size:10.8px;color:#686868;">1,056 KB</div>
<svg style="position:absolute;left:167px;top:451px" width="15" height="15" viewBox="0 0 15 15"><path d="M2.5 4.8 V0.8 H10 L12.6 3.4 V4.8" stroke="#a0a0a0" stroke-width="1" fill="none"/><path d="M4.5 2.6 H9" stroke="#d0d0d0" stroke-width="0.8"/><rect x="1" y="4.8" width="12" height="6.2" rx="0.6" fill="#cf1020"/><path d="M2.8 6.4 H4.3 Q5 6.4 5 7.2 Q5 8 4.3 8 H2.8 V9.6 M6.2 6.4 V9.6 H7.2 Q8.2 9.6 8.2 8 Q8.2 6.4 7.2 6.4 Z M9.5 9.6 V6.4 H11.6 M9.5 8 H11" stroke="#fff" stroke-width="0.85" fill="none"/><path d="M2.5 11 V13.8" stroke="#a0a0a0" stroke-width="1"/></svg>
<div class="t" style="left:185.20px;top:454px;font-size:11px;color:#1a1a1a;letter-spacing:-0.224px;">StarBus_ _ UTC Online 4.01</div>
<div class="t" style="left:442.90px;top:454px;font-size:10.8px;color:#686868;letter-spacing:0.200px;">25-11-2025 21:59</div>
<div class="t" style="left:594.20px;top:454px;font-size:10.8px;color:#686868;letter-spacing:0.033px;">Microsoft Edge PDF ...</div>
<div class="t" style="right:407.30px;text-align:right;top:454px;font-size:10.8px;color:#686868;letter-spacing:0.100px;">174 KB</div>
<svg style="position:absolute;left:168px;top:477px" width="14" height="15" viewBox="0 0 14 15"><path d="M11.8 4 V13.8 H1.5" stroke="#d6d6d6" stroke-width="0.8" fill="none"/><path d="M1.5 13.9 V0.5 H8.6 L11.9 3.6" stroke="#666" stroke-width="1.05" fill="none"/><path d="M8.6 0.5 V3.6 H11.9" stroke="#777" stroke-width="0.9" fill="none"/><rect x="4.3" y="5.3" width="5.4" height="5.3" fill="#2768c8"/><path d="M4.5 10.6 L7 7.8 L9.5 10.6 Z" fill="#4e9ee6"/></svg>
<div class="t" style="left:185.20px;top:480px;font-size:11px;color:#1a1a1a;letter-spacing:-0.244px;">SB5JMVFZXSBNLticket</div>
<div class="t" style="left:442.90px;top:480px;font-size:10.8px;color:#686868;letter-spacing:0.200px;">25-11-2025 21:54</div>
<div class="t" style="left:594.20px;top:480px;font-size:10.8px;color:#686868;letter-spacing:-0.243px;">PNG File</div>
<div class="t" style="right:407.40px;text-align:right;top:480px;font-size:10.8px;color:#686868;">414 KB</div>
<svg style="position:absolute;left:167px;top:503px" width="15" height="15" viewBox="0 0 15 15"><path d="M2.5 4.8 V0.8 H10 L12.6 3.4 V4.8" stroke="#a0a0a0" stroke-width="1" fill="none"/><path d="M4.5 2.6 H9" stroke="#d0d0d0" stroke-width="0.8"/><rect x="1" y="4.8" width="12" height="6.2" rx="0.6" fill="#cf1020"/><path d="M2.8 6.4 H4.3 Q5 6.4 5 7.2 Q5 8 4.3 8 H2.8 V9.6 M6.2 6.4 V9.6 H7.2 Q8.2 9.6 8.2 8 Q8.2 6.4 7.2 6.4 Z M9.5 9.6 V6.4 H11.6 M9.5 8 H11" stroke="#fff" stroke-width="0.85" fill="none"/><path d="M2.5 11 V13.8" stroke="#a0a0a0" stroke-width="1"/></svg>
<div class="t" style="left:185.20px;top:506px;font-size:11px;color:#1a1a1a;letter-spacing:-0.492px;">SB5JMVFZXSBNL</div>
<div class="t" style="left:442.90px;top:506px;font-size:10.8px;color:#686868;letter-spacing:0.200px;">25-11-2025 21:54</div>
<div class="t" style="left:594.20px;top:506px;font-size:10.8px;color:#686868;letter-spacing:0.033px;">Microsoft Edge PDF ...</div>
<div class="t" style="right:407.52px;text-align:right;top:506px;font-size:10.8px;color:#686868;letter-spacing:-0.125px;">27 KB</div>
<svg style="position:absolute;left:167px;top:530px" width="15" height="15" viewBox="0 0 15 15"><path d="M2.5 4.8 V0.8 H10 L12.6 3.4 V4.8" stroke="#a0a0a0" stroke-width="1" fill="none"/><path d="M4.5 2.6 H9" stroke="#d0d0d0" stroke-width="0.8"/><rect x="1" y="4.8" width="12" height="6.2" rx="0.6" fill="#cf1020"/><path d="M2.8 6.4 H4.3 Q5 6.4 5 7.2 Q5 8 4.3 8 H2.8 V9.6 M6.2 6.4 V9.6 H7.2 Q8.2 9.6 8.2 8 Q8.2 6.4 7.2 6.4 Z M9.5 9.6 V6.4 H11.6 M9.5 8 H11" stroke="#fff" stroke-width="0.85" fill="none"/><path d="M2.5 11 V13.8" stroke="#a0a0a0" stroke-width="1"/></svg>
<div class="t" style="left:185.20px;top:533px;font-size:11px;color:#1a1a1a;letter-spacing:-0.229px;">StarBus_ _ UTC Online 4.0</div>
<div class="t" style="left:442.90px;top:533px;font-size:10.8px;color:#686868;letter-spacing:0.200px;">25-11-2025 21:45</div>
<div class="t" style="left:594.20px;top:533px;font-size:10.8px;color:#686868;letter-spacing:0.033px;">Microsoft Edge PDF ...</div>
<div class="t" style="right:407.40px;text-align:right;top:533px;font-size:10.8px;color:#686868;">175 KB</div>
<svg style="position:absolute;left:168px;top:556px" width="14" height="15" viewBox="0 0 14 15"><path d="M11.8 4 V13.8 H1.5" stroke="#d6d6d6" stroke-width="0.8" fill="none"/><path d="M1.5 13.9 V0.5 H8.6 L11.9 3.6" stroke="#666" stroke-width="1.05" fill="none"/><path d="M8.6 0.5 V3.6 H11.9" stroke="#777" stroke-width="0.9" fill="none"/><rect x="4.3" y="5.3" width="5.4" height="5.3" fill="#2768c8"/><path d="M4.5 10.6 L7 7.8 L9.5 10.6 Z" fill="#4e9ee6"/></svg>
<div class="t" style="left:185.20px;top:559px;font-size:11px;color:#1a1a1a;letter-spacing:0.290px;">punch spy 2</div>
<div class="t" style="left:442.90px;top:559px;font-size:10.8px;color:#686868;letter-spacing:0.200px;">25-11-2025 21:21</div>
<div class="t" style="left:595.20px;top:559px;font-size:10.8px;color:#686868;letter-spacing:-0.463px;">WEBP File</div>
<div class="t" style="right:407.40px;text-align:right;top:559px;font-size:10.8px;color:#686868;">84 KB</div>
<svg style="position:absolute;left:168px;top:582px" width="14" height="15" viewBox="0 0 14 15"><path d="M11.8 4 V13.8 H1.5" stroke="#d6d6d6" stroke-width="0.8" fill="none"/><path d="M1.5 13.9 V0.5 H8.6 L11.9 3.6" stroke="#666" stroke-width="1.05" fill="none"/><path d="M8.6 0.5 V3.6 H11.9" stroke="#777" stroke-width="0.9" fill="none"/><rect x="4.3" y="5.3" width="5.4" height="5.3" fill="#2768c8"/><path d="M4.5 10.6 L7 7.8 L9.5 10.6 Z" fill="#4e9ee6"/></svg>
<div class="t" style="left:185.20px;top:585px;font-size:11px;color:#1a1a1a;letter-spacing:0.144px;">punch spy1</div>
<div class="t" style="left:442.90px;top:585px;font-size:10.8px;color:#686868;letter-spacing:0.200px;">25-11-2025 21:21</div>
<div class="t" style="left:595.20px;top:585px;font-size:10.8px;color:#686868;letter-spacing:-0.463px;">WEBP File</div>
<div class="t" style="right:407.40px;text-align:right;top:585px;font-size:10.8px;color:#686868;">160 KB</div>
<svg style="position:absolute;left:168px;top:608px" width="14" height="15" viewBox="0 0 14 15"><path d="M11.8 4 V13.8 H1.5" stroke="#d6d6d6" stroke-width="0.8" fill="none"/><path d="M1.5 13.9 V0.5 H8.6 L11.9 3.6" stroke="#666" stroke-width="1.05" fill="none"/><path d="M8.6 0.5 V3.6 H11.9" stroke="#777" stroke-width="0.9" fill="none"/><rect x="4.3" y="5.3" width="5.4" height="5.3" fill="#2768c8"/><path d="M4.5 10.6 L7 7.8 L9.5 10.6 Z" fill="#4e9ee6"/></svg>
<div class="t" style="left:186.20px;top:611px;font-size:11px;color:#1a1a1a;letter-spacing:0.300px;">2026-tata-punch-facelift-india-1</div>
<div class="t" style="left:442.90px;top:611px;font-size:10.8px;color:#686868;letter-spacing:0.200px;">25-11-2025 21:20</div>
<div class="t" style="left:595.20px;top:611px;font-size:10.8px;color:#686868;letter-spacing:-0.650px;">JPEG File</div>
<div class="t" style="right:407.40px;text-align:right;top:611px;font-size:10.8px;color:#686868;">103 KB</div>
<div style="position:absolute;left:130px;top:83px;width:16px;height:545px;background:#ffffff"></div>
<div style="position:absolute;left:131px;top:83px;width:15px;height:545px;background:#f0f0f0"></div>
<div style="position:absolute;left:137px;top:99px;width:3px;height:498.5px;background:#8a8a8a;border-radius:2px"></div>
<div style="position:absolute;left:146px;top:83px;width:1px;height:545px;background:#f7f7f7"></div>
</body></html>
